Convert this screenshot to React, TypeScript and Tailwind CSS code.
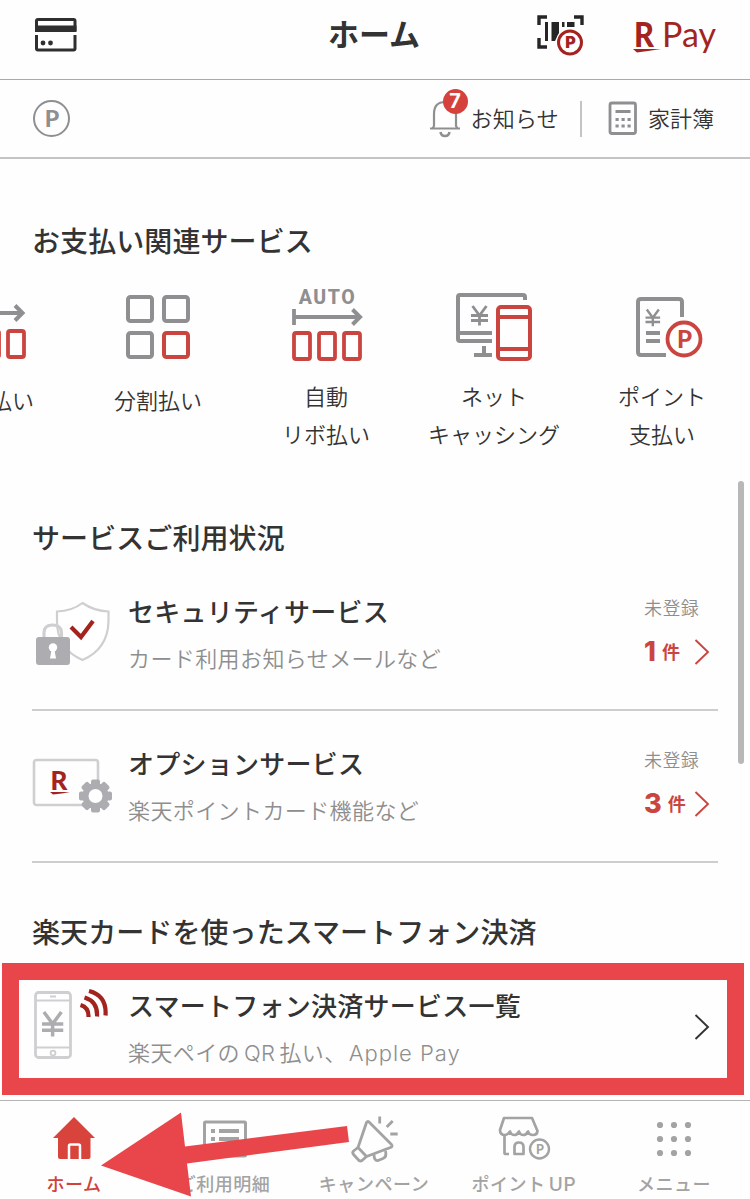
import type { ReactNode } from "react"

const GRAY = "#8f8f92"
const RED = "#cb4540"
const CRIMSON = "#a3241f"
const PALE = "#cfcfd2"
const SILVER = "#adadb1"
const NAV = "#a3a3a3"

interface PaymentItem {
  lines: string[]
  icon: ReactNode
}

interface ServiceRowProps {
  icon: ReactNode
  title: string
  description: ReactNode
  count?: number
}

interface NavItem {
  id: string
  label: ReactNode
  icon: ReactNode
  active?: boolean
}

function CardIcon() {
  return (
    <svg width="44" height="36" viewBox="0 0 44 36" fill="none">
      <path d="M2.5 14V4Q2.5 2.5 4 2.5H39.5Q41 2.5 41 4V14" stroke="#2f2f2f" strokeWidth="3" />
      <path d="M1 8.5H42.5V15H1Z" fill="#2f2f2f" />
      <path d="M2.5 18V31.5Q2.5 33 4 33H39.5Q41 33 41 31.5V18" stroke="#2f2f2f" strokeWidth="3" />
      <circle cx="9" cy="26" r="2.4" fill="#2f2f2f" />
      <circle cx="16.5" cy="26" r="2.4" fill="#2f2f2f" />
    </svg>
  )
}

function BarcodeIcon() {
  return (
    <svg width="50" height="44" viewBox="0 -1 50 44" fill="none">
      <path d="M3 11V3H11M38 3H46V11M3 24V33H11" stroke="#262626" strokeWidth="3.4" />
      <path d="M9 8H12V27H9ZM15.5 8H23V19L19 27H15.5ZM26 8H28.5V13H26ZM31 8H38.5V13H31Z" fill="#262626" />
      <circle cx="34" cy="28.5" r="14" fill="#fff" />
      <circle cx="34" cy="28.5" r="11.5" fill="#fff" stroke={CRIMSON} strokeWidth="3" />
      <text x="34.5" y="34.2" textAnchor="middle" fontSize="16" fontWeight="900" fontFamily="Inter, sans-serif" fill={CRIMSON}>P</text>
    </svg>
  )
}

function RakutenMark() {
  return (
    <svg width="29" height="42" viewBox="0 -5 29 42" className="shrink-0">
      <text x="1" y="27.5" fontSize="34" fontWeight="900" fontFamily="Lato, sans-serif" fill={CRIMSON} textLength="20" lengthAdjust="spacingAndGlyphs">R</text>
      <path d="M0 30H28Q14 32 4 33.5Z" fill={CRIMSON} />
    </svg>
  )
}

function BellIcon() {
  return (
    <svg width="32" height="38" viewBox="0 0 32 38" fill="none" stroke={GRAY} strokeWidth="2.2">
      <path d="M1 28.5H31M3.5 28.5L5 26V14Q5 2 16 2Q27 2 27 14V26L28.5 28.5" />
      <path d="M11.5 32Q12 36 16 36Q20 36 20.5 32" strokeWidth="2.5" />
    </svg>
  )
}

function CalculatorIcon() {
  return (
    <svg width="30" height="35" viewBox="0 0 30 35" fill="none">
      <rect x="2" y="2" width="25.5" height="30.5" rx="2" stroke={GRAY} strokeWidth="2.8" />
      <path d="M7.5 10.5H22.5" stroke={GRAY} strokeWidth="3" />
      <path d="M7.5 18.5H23M7.5 25H23" stroke={GRAY} strokeWidth="3" strokeDasharray="3.2 2.8" />
    </svg>
  )
}

function RevolvingIcon() {
  return (
    <svg width="78" height="78" viewBox="-1 3 78 78" fill="none">
      <path d="M3 28H70" stroke={GRAY} strokeWidth="3.8" />
      <path d="M63 20.5L70.500 28L63 35.5" stroke={GRAY} strokeWidth="4" />
      {[6, 31, 56].map((x) => (
        <rect key={x} x={x} y="46" width="16" height="26" rx="2" stroke={RED} strokeWidth="3.8" />
      ))}
    </svg>
  )
}

function AutoRevolvingIcon() {
  return (
    <svg width="74" height="78" viewBox="-1 1 74 78" fill="none" className="overflow-visible">
      <text x="37.5" y="17" textAnchor="middle" fontSize="19.5" letterSpacing="1.6" fontWeight="800" fontFamily="Roboto, sans-serif" fill={GRAY}>AUTO</text>
      <path d="M4 22V38M4 30H71" stroke={GRAY} strokeWidth="3.8" />
      <path d="M62.5 22.5L70 30L62.5 37.5" stroke={GRAY} strokeWidth="4" />
      {[4, 29, 54].map((x) => (
        <rect key={x} x={x} y="46" width="16" height="26" rx="2" stroke={RED} strokeWidth="3.8" />
      ))}
    </svg>
  )
}

function InstallmentIcon() {
  return (
    <svg width="66" height="66" viewBox="0 0 66 66" fill="none" strokeWidth="4">
      <rect x="3" y="3" width="24" height="24" rx="2.5" stroke={GRAY} />
      <rect x="39" y="3" width="24" height="24" rx="2.5" stroke={GRAY} />
      <rect x="3" y="39" width="24" height="24" rx="2.5" stroke={GRAY} />
      <rect x="39" y="39" width="24" height="24" rx="2.5" stroke={RED} />
    </svg>
  )
}

function YenMark({ x, y, scale = 1, color = GRAY }: { x: number; y: number; scale?: number; color?: string }) {
  return (
    <g transform={`translate(${x} ${y}) scale(${scale})`} stroke={color} strokeWidth="2.8" fill="none">
      <path d="M1.5 0L8.5 9.5L15.5 0M8.5 9V19.5M0 9.5H17M0 14.5H17" />
    </g>
  )
}

function CashingIcon() {
  return (
    <svg width="78" height="72" viewBox="0 -1 78 72" fill="none">
      <path d="M70 8V5Q70 3 68 3H5Q3 3 3 5V47Q3 49 5 49H37M3 41H37M19 63H37M29 54V63" stroke={GRAY} strokeWidth="4" />
      <YenMark x={16} y={14} />
      <rect x="43" y="15" width="32" height="52" rx="3" stroke={RED} strokeWidth="4" />
      <path d="M43 25H75M43 57H75" stroke={RED} strokeWidth="4" />
    </svg>
  )
}

function PointPayIcon() {
  return (
    <svg width="82" height="66" viewBox="-12 -2 82 66" fill="none">
      <path d="M49 21V6Q49 3 46 3H8Q5 3 5 6V56Q5 59 8 59H33" stroke={GRAY} strokeWidth="4" />
      <YenMark x={12.5} y={13.5} scale={0.86} />
      <path d="M13 37H27M13 45H27" stroke={GRAY} strokeWidth="3.8" />
      <circle cx="51" cy="43" r="16.5" stroke={RED} strokeWidth="3.8" />
      <text x="51.5" y="51.5" textAnchor="middle" fontSize="24" fontWeight="900" fontFamily="Lato, sans-serif" fill={RED}>P</text>
    </svg>
  )
}

function SecurityIcon() {
  return (
    <svg width="80" height="66" viewBox="0 -2 80 66" fill="none">
      <path d="M50.5 2Q62 10 76.5 10.5V20Q76 48 50.5 59Q25 48 25 20V10.5Q40 10 50.5 2Z" fill="#fff" stroke={PALE} strokeWidth="2.2" />
      <path d="M39 26L49 36L61 20" stroke={CRIMSON} strokeWidth="4.2" />
      <path d="M12 38V32Q12 24 20.5 24Q29.5 24 29.5 32V38" stroke={PALE} strokeWidth="3.2" />
      <rect x="4" y="36" width="34" height="28" rx="3" fill={SILVER} />
      <circle cx="21" cy="46.5" r="4.200" fill="#fff" />
      <path d="M19.500 49H22.500L24 57.500H18Z" fill="#fff" />
    </svg>
  )
}

function OptionIcon() {
  return (
    <svg width="82" height="60" viewBox="0 -4 82 60" fill="none">
      <rect x="2" y="2" width="64" height="45" rx="2.5" stroke={PALE} strokeWidth="2.6" />
      <text x="18.5" y="31.5" fontSize="26" fontWeight="900" fontFamily="Lato, sans-serif" fill={CRIMSON}>R</text>
      <path d="M18 34H38Q30 35.5 21 36.5Z" fill={CRIMSON} />
      {[0, 45, 90, 135].map((deg) => (
        <rect key={deg} x="59" y="21.5" width="9" height="33" rx="2" fill={SILVER} transform={`rotate(${deg} 63.5 38)`} />
      ))}
      <circle cx="63.5" cy="38" r="10" fill="#fff" stroke={SILVER} strokeWidth="6" />
    </svg>
  )
}

function SmartphoneIcon() {
  return (
    <svg width="80" height="74" viewBox="0 2 80 74" fill="none">
      <rect x="3.5" y="5.5" width="35" height="65" rx="3" stroke={PALE} strokeWidth="2.8" />
      <path d="M3 13.5H39M3 60.5H39M18 9.5H24" stroke={PALE} strokeWidth="2" />
      <circle cx="21" cy="66" r="2.4" stroke={PALE} strokeWidth="1.8" />
      <YenMark x={10} y={25} scale={1.25} color={SILVER} />
      <path d="M48.5 18Q57 20.5 56.5 30M52.5 10.500Q66 14.5 65 29.5M57 4Q75 8.5 73.5 28.5" stroke={CRIMSON} strokeWidth="4.2" />
    </svg>
  )
}

function ChevronIcon({ color }: { color: string }) {
  return (
    <svg width="16" height="28" viewBox="0 0 16 28" fill="none">
      <path d="M1.5 2L14 14L1.5 26" stroke={color} strokeWidth="1.9" />
    </svg>
  )
}

function HomeIcon() {
  return (
    <svg width="44" height="44" viewBox="0 0 44 44">
      <path d="M22 0L43 21H38.5V40Q38.5 42 36.5 42H8Q6 42 6 40V21H1Z" fill="#d8433c" />
      <path d="M17 42V29Q17 27.5 18.5 27.5H26.5Q28 27.5 28 29V42" fill="none" stroke="#fff" strokeWidth="2.5" />
    </svg>
  )
}

function StatementIcon() {
  return (
    <svg width="46" height="38" viewBox="-2 0 46 38" fill="none">
      <rect x="1.5" y="2" width="41" height="34" rx="1" stroke={NAV} strokeWidth="3" />
      <path d="M8 11H12M16 11H36M8 19H12M16 19H36M8 27H12M16 27H36" stroke={NAV} strokeWidth="4" />
    </svg>
  )
}

function CampaignIcon() {
  return (
    <svg width="50" height="50" viewBox="0 -1 50 50" fill="none" stroke={NAV} strokeWidth="2.8" strokeLinejoin="round">
      <path d="M17.5 7.5Q19 5.5 20.5 7.5L42.5 29.5Q44 31.5 41.5 32.5L17.5 41.5L9 32.5Z" />
      <path d="M9 32.5L4.5 36Q3 37.5 4.5 39.5L10 45.5Q11.5 46.5 13 45.5L17.5 41.5" />
      <path d="M25 39.5Q25 46 29 45.5L34 43.5Q38 42 36.5 36" />
      <path d="M30.7 1.5V8.5M37.7 12L43.7 6M41.3 19H48.7" />
    </svg>
  )
}

function PointUpIcon() {
  return (
    <svg width="54" height="46" viewBox="-1 0 54 46" fill="none" stroke={NAV} strokeWidth="2.7" strokeLinejoin="round">
      <path d="M6 2H34L39.5 15Q39 19 35 19Q31 19 30 15.5Q28 19 25.5 19Q22 19 21 15.5Q19 19 16.5 19Q13 19 12 15.5Q10 19 7 19Q2 19 2 14Z" />
      <path d="M6.5 19V37Q6.5 38 8 38H11M16.5 38V31Q16.5 26.5 21 26.5Q25.5 26.5 25.5 31V38Z" />
      <circle cx="41.5" cy="33" r="9.5" strokeWidth="2.4" />
      <text x="41.8" y="37.5" textAnchor="middle" fontSize="12.5" fontWeight="900" fontFamily="Lato, sans-serif" fill={NAV} stroke="none">P</text>
    </svg>
  )
}

function MenuIcon() {
  return (
    <svg width="36" height="36" viewBox="0 0 36 36" fill={NAV}>
      {[4, 18, 32].map((y) =>
        [4, 18, 32].map((x) => <circle key={`${x}-${y}`} cx={x} cy={y} r="3.1" />)
      )}
    </svg>
  )
}

const payments: PaymentItem[] = [
  { lines: ["リボ払い"], icon: <RevolvingIcon /> },
  { lines: ["分割払い"], icon: <InstallmentIcon /> },
  { lines: ["自動", "リボ払い"], icon: <AutoRevolvingIcon /> },
  { lines: ["ネット", "キャッシング"], icon: <CashingIcon /> },
  { lines: ["ポイント", "支払い"], icon: <PointPayIcon /> },
]

const navItems: NavItem[] = [
  { id: "home", label: "ホーム", icon: <HomeIcon />, active: true },
  { id: "statement", label: "ご利用明細", icon: <StatementIcon /> },
  { id: "campaign", label: "キャンペーン", icon: <CampaignIcon /> },
  {
    id: "point",
    label: (
      <>
        ポイント<span className="ml-[3px] text-[19px] tracking-[0.8px]">UP</span>
      </>
    ),
    icon: <PointUpIcon />,
  },
  { id: "menu", label: "メニュー", icon: <MenuIcon /> },
]

function SectionTitle({ children }: { children: ReactNode }) {
  return <h2 className="text-[28px] leading-[40px] font-medium tracking-[0.08px] text-[#333]">{children}</h2>
}

function ServiceRow({ icon, title, description, count }: ServiceRowProps) {
  return (
    <div className="flex h-[152px] items-start border-b-2 border-[#cdcdcd] pt-[34px]">
      <div className="flex h-[78px] w-[96px] shrink-0 items-center">{icon}</div>
      <div className="flex-1">
        <h3 className="text-[26px] leading-[40px] font-medium tracking-[0.25px] text-[#333]">{title}</h3>
        <p className="mt-[8px] text-[22px] leading-[36px] font-[350] tracking-[0.4px] text-[#8e8e8e]">{description}</p>
      </div>
      {count === undefined ? (
        <div className="mt-[26px] mr-[8px]">
          <ChevronIcon color="#333" />
        </div>
      ) : (
        <div className="w-[74px] text-[#cb4540]">
          <p className="text-[18px] leading-[32px] font-[350] tracking-[0.4px] text-[#8e8e8e]">未登録</p>
          <div className="mt-[11px] flex h-[32px] items-center">
            <span className="text-[27px] font-extrabold">{count}</span>
            <span className="ml-[6px] text-[18px] font-bold">件</span>
            <span className="mr-[8px] ml-auto">
              <ChevronIcon color={RED} />
            </span>
          </div>
        </div>
      )}
    </div>
  )
}

export default function App() {
  return (
    <div className="relative flex h-[1199px] w-[750px] flex-col overflow-hidden bg-[#fefefe] font-['Inter','Noto_Sans_CJK_JP',sans-serif] text-[#333]">
      {/* ヘッダー */}
      <header className="grid h-[80px] shrink-0 grid-cols-3 items-center border-b border-[#aaa] px-[34px] pb-[9px]">
        <CardIcon />
        <h1 className="mr-[2px] text-center text-[31px] font-bold">ホーム</h1>
        <div className="flex items-center justify-end">
          <BarcodeIcon />
          <div className="ml-[47px] flex items-center">
            <RakutenMark />
            <span className="mb-[2px] font-[Lato] text-[34px] leading-[42px] text-[#a3241f]">Pay</span>
          </div>
        </div>
      </header>

      <div className="flex h-[79px] shrink-0 items-center border-b-2 border-[#c4c4c4] pr-[36px] pl-[33px] text-[22px] font-[350]">
        <span className="flex size-[37px] items-center justify-center rounded-full border-2 border-[#8f8f92] pl-px font-[Lato] text-[23px] font-black text-[#8f8f92]">
          P
        </span>
        <div className="relative ml-auto flex items-center">
          <BellIcon />
          <span className="absolute -top-[11px] left-[14px] flex size-[25px] items-center justify-center rounded-full bg-[#d5423d] text-[20px] font-bold text-white">
            7
          </span>
          <span className="mt-[2px] ml-[10px] tracking-[0.2px]">お知らせ</span>
        </div>
        <span className="mr-[26px] ml-[21px] h-[36px] w-[2px] bg-[#c4c4c4]" />
        <CalculatorIcon />
        <span className="mt-[2px] ml-[10px]">家計簿</span>
      </div>

      {/* コンテンツ */}
      <main className="min-h-0 flex-1 overflow-hidden px-[32px] pt-[63px]">
        <SectionTitle>お支払い関連サービス</SectionTitle>
        <div className="-ml-[126px] flex w-[840px] pt-[21px]">
          {payments.map((item) => (
            <div key={item.lines.join("")} className="flex w-[168px] shrink-0 flex-col items-center">
              <div className="flex h-[88px] items-center">{item.icon}</div>
              <div className={`flex h-[92px] flex-col text-center text-[22px] leading-[38px] font-[350] whitespace-nowrap ${item.lines.length > 1 ? "pt-[7px]" : "pt-[11px]"}`}>
                {item.lines.map((line) => (
                  <span key={line}>{line}</span>
                ))}
              </div>
            </div>
          ))}
        </div>

        <div className="mt-[56px]">
          <SectionTitle>サービスご利用状況</SectionTitle>
        </div>
        <ServiceRow icon={<SecurityIcon />} title="セキュリティサービス" description="カード利用お知らせメールなど" count={1} />
        <ServiceRow icon={<OptionIcon />} title="オプションサービス" description="楽天ポイントカード機能など" count={3} />

        <div className="mt-[50px]">
          <SectionTitle>楽天カードを使ったスマートフォン決済</SectionTitle>
        </div>
        <ServiceRow
          icon={<SmartphoneIcon />}
          title="スマートフォン決済サービス一覧"
          description={
            <>
              楽天ペイの<span className="mx-[4px]">QR</span>払い、<span className="ml-[2px] tracking-[1px]">Apple Pay</span>
            </>
          }
        />
      </main>

      {/* 下部ナビゲーション */}
      <nav className="grid h-[99px] shrink-0 grid-cols-5 border-t border-[#b4b4b4] bg-[#fefefe]">
        {navItems.map((item) => (
          <div key={item.id} className={`flex flex-col items-center pt-[14px] pr-[2px] ${item.active ? "text-[#d0423c]" : "text-[#a3a3a3]"}`}>
            <div className="flex h-[48px] items-center">{item.icon}</div>
            <span className="mt-[8px] text-[18px] leading-[28px] font-medium tracking-[0.55px] whitespace-nowrap">{item.label}</span>
          </div>
        ))}
      </nav>

      <span className="absolute top-[481px] left-[738px] h-[283px] w-[6px] rounded-full bg-[#b8b8b8]" />
      <div className="absolute top-[963px] left-[2px] h-[132px] w-[742px] border-[17px] border-[#e8464b]" />
      <svg className="absolute top-[1112px] left-[101px]" width="250" height="86" viewBox="0 0 250 86">
        <path d="M0 53.5L80 0.5L84 34.5L246 14L248 30L86 51.5L90 84.5Z" fill="#e8464b" />
      </svg>
    </div>
  )
}
